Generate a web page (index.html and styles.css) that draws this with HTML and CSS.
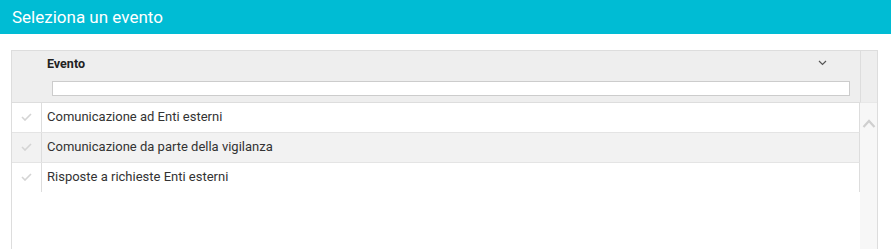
FILE: index.html
```html
<!DOCTYPE html>
<html lang="it">
<head>
    <meta charset="UTF-8">
    <title>Seleziona un evento</title>
    <link rel="stylesheet" href="styles.css">
</head>
<body>
    <div class="topbar">Seleziona un evento</div>

    <div class="grid">
        <div class="grid-main">
            <!-- Header with filter -->
            <div class="grid-header">
                <div class="header-title">
                    <span>Evento</span>
                    <svg class="sort-icon" width="9" height="6" viewBox="0 0 9 6"><path d="M1 1 L4.5 4.5 L8 1" fill="none" stroke="#555" stroke-width="1.2"/></svg>
                </div>
                <input class="filter" type="text">
            </div>

            <!-- Rows -->
            <div class="grid-row">
                <div class="check-cell"><svg width="11" height="8" viewBox="0 0 11 8"><path d="M1 4 L4 7 L10 1" fill="none" stroke="#d4d4d4" stroke-width="1.6"/></svg></div>
                <div class="text-cell">Comunicazione ad Enti esterni</div>
            </div>
            <div class="grid-row alt">
                <div class="check-cell"><svg width="11" height="8" viewBox="0 0 11 8"><path d="M1 4 L4 7 L10 1" fill="none" stroke="#d4d4d4" stroke-width="1.6"/></svg></div>
                <div class="text-cell">Comunicazione da parte della vigilanza</div>
            </div>
            <div class="grid-row">
                <div class="check-cell"><svg width="11" height="8" viewBox="0 0 11 8"><path d="M1 4 L4 7 L10 1" fill="none" stroke="#d4d4d4" stroke-width="1.6"/></svg></div>
                <div class="text-cell">Risposte a richieste Enti esterni</div>
            </div>
        </div>

        <div class="grid-scroll">
            <div class="scroll-head"></div>
            <div class="scroll-track">
                <svg class="scroll-up" width="14" height="9" viewBox="0 0 14 9"><path d="M1.5 8 L7 2 L12.5 8" fill="none" stroke="#cfcfcf" stroke-width="2.2"/></svg>
            </div>
        </div>
    </div>
</body>
</html>
```

FILE: styles.css
```css
* {
    box-sizing: border-box;
}
html, body {
    height: 100%;
}
body {
    margin: 0;
    font-family: Roboto, "Liberation Sans", sans-serif;
    background-color: #fff;
    color: #333;
    display: flex;
    flex-direction: column;
}
.topbar {
    height: 34px;
    line-height: 34px;
    padding-left: 12px;
    background-color: #00bcd4;
    color: #fff;
    font-size: 17px;
}
.grid {
    flex: 1;
    display: flex;
    margin: 16px 13px 0 11px;
    border-left: 1px solid #ddd;
    border-top: 1px solid #ddd;
}
.grid-main {
    flex: 1;
}
.grid-header {
    height: 52px;
    padding: 4px 10px 0 35px;
    background-color: #eee;
    border-bottom: 1px solid #ddd;
}
.header-title {
    display: flex;
    justify-content: space-between;
    align-items: center;
    height: 16px;
    padding-right: 23px;
    font-size: 12.5px;
    font-weight: bold;
    color: #222;
}
.sort-icon {
    display: block;
}
.filter {
    display: block;
    width: calc(100% - 5px);
    height: 15px;
    margin: 10px 0 0 5px;
    border: 1px solid #ccc;
    background-color: #fff;
    padding: 0;
}
.grid-row {
    display: flex;
    height: 30px;
    border-bottom: 1px solid #e4e4e4;
    border-right: 1px solid #ddd;
    font-size: 13px;
}
.grid-row:last-child {
    border-bottom: none;
    height: 29px;
}
.grid-row.alt {
    background-color: #f2f2f2;
}
.check-cell {
    width: 30px;
    border-right: 1px solid #ddd;
    display: flex;
    align-items: center;
    justify-content: center;
    padding-bottom: 2px;
}
.check-cell svg {
    display: block;
}
.text-cell {
    padding-left: 5px;
    line-height: 28px;
    color: #333;
}
.grid-scroll {
    width: 18px;
    display: flex;
    flex-direction: column;
    border-right: 1px solid #ddd;
}
.scroll-head {
    height: 52px;
    background-color: #eee;
    border-left: 1px solid #ddd;
    border-bottom: 1px solid #e8e8e8;
}
.scroll-track {
    flex: 1;
    background-color: #f7f7f7;
    padding-top: 16px;
    display: flex;
    justify-content: center;
    align-items: flex-start;
}
.scroll-up {
    display: block;
}
```
